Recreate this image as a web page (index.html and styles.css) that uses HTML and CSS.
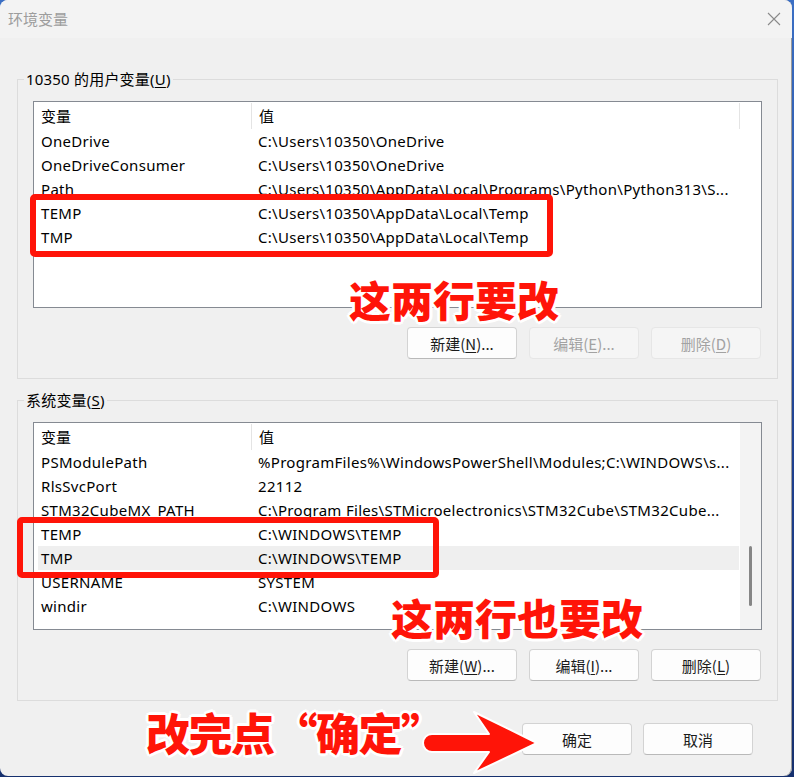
FILE: index.html
```html
<!DOCTYPE html>
<html lang="zh-CN">
<head>
<meta charset="utf-8">
<title>环境变量</title>
<link rel="stylesheet" href="styles.css">
</head>
<body>
<div class="window">
  <div class="titlebar">
    <span class="title">环境变量</span>
    <svg class="close" width="14" height="14" viewBox="0 0 14 14"><path d="M1 1 L13 13 M13 1 L1 13" stroke="#8a8a8a" stroke-width="1.1" fill="none"/></svg>
  </div>
  <div class="content">
    <fieldset class="group group-user">
      <legend>10350 的用户变量(<u>U</u>)</legend>
      <div class="list">
        <div class="head">
          <span class="hc hc1">变量</span><span class="hc hc2">值</span><span class="hc hc3"></span>
        </div>
        <div class="rows">
          <div class="row"><span class="c1">OneDrive</span><span class="c2">C:\Users\10350\OneDrive</span></div>
          <div class="row"><span class="c1">OneDriveConsumer</span><span class="c2">C:\Users\10350\OneDrive</span></div>
          <div class="row"><span class="c1">Path</span><span class="c2">C:\Users\10350\AppData\Local\Programs\Python\Python313\S...</span></div>
          <div class="row"><span class="c1">TEMP</span><span class="c2">C:\Users\10350\AppData\Local\Temp</span></div>
          <div class="row"><span class="c1">TMP</span><span class="c2">C:\Users\10350\AppData\Local\Temp</span></div>
        </div>
      </div>
      <div class="btns">
        <button class="btn">新建(<u>N</u>)...</button>
        <button class="btn" disabled>编辑(<u>E</u>)...</button>
        <button class="btn" disabled>删除(<u>D</u>)</button>
      </div>
    </fieldset>

    <fieldset class="group group-sys">
      <legend>系统变量(<u>S</u>)</legend>
      <div class="list list-scroll">
        <div class="main">
          <div class="head">
            <span class="hc hc1">变量</span><span class="hc hc2">值</span>
          </div>
          <div class="rows">
            <div class="row"><span class="c1">PSModulePath</span><span class="c2">%ProgramFiles%\WindowsPowerShell\Modules;C:\WINDOWS\s...</span></div>
            <div class="row"><span class="c1">RlsSvcPort</span><span class="c2">22112</span></div>
            <div class="row"><span class="c1">STM32CubeMX_PATH</span><span class="c2">C:\Program Files\STMicroelectronics\STM32Cube\STM32Cube...</span></div>
            <div class="row"><span class="c1">TEMP</span><span class="c2">C:\WINDOWS\TEMP</span></div>
            <div class="row row-hover"><span class="c1">TMP</span><span class="c2">C:\WINDOWS\TEMP</span></div>
            <div class="row"><span class="c1">USERNAME</span><span class="c2">SYSTEM</span></div>
            <div class="row"><span class="c1">windir</span><span class="c2">C:\WINDOWS</span></div>
          </div>
        </div>
        <div class="scrollbar"><div class="thumb"></div></div>
      </div>
      <div class="btns">
        <button class="btn">新建(<u>W</u>)...</button>
        <button class="btn">编辑(<u>I</u>)...</button>
        <button class="btn">删除(<u>L</u>)</button>
      </div>
    </fieldset>

    <div class="footer">
      <button class="btn">确定</button>
      <button class="btn">取消</button>
    </div>
  </div>

  <div class="mark mark-box1"></div>
  <div class="mark mark-box2"></div>
  <div class="note note1">这两行要改</div>
  <div class="note note2">这两行也要改</div>
  <div class="note note3">改完点“确定”</div>
  <svg class="arrow" width="130" height="70" viewBox="415 708 130 70">
    <path d="M432 734 L489 734 L474 712 L537 743 L474 773 L489 752 L432 752 A9 9 0 0 1 432 734 Z" fill="#ff1408" stroke="#ffffff" stroke-width="2" stroke-linejoin="round"/>
  </svg>
</div>
</body>
</html>
```

FILE: styles.css
```css
* { box-sizing: border-box; }

html, body {
  margin: 0;
  padding: 0;
}

body {
  width: 794px;
  height: 777px;
  background: linear-gradient(180deg, #3b6fc4 0%, #1d3f8f 60%, #16306e 100%);
  font-family: "Noto Sans", "Noto Sans CJK SC", sans-serif;
  font-size: 15px;
  color: #000;
  overflow: hidden;
}

.window {
  position: relative;
  width: 792px;
  height: 776px;
  background: #f0f0f0;
  border-radius: 8px;
  overflow: hidden;
  box-shadow: inset -1px 0 0 #9a9a9a;
}

.titlebar {
  height: 38px;
  display: flex;
  align-items: center;
  justify-content: space-between;
  padding: 0 11px 0 8px;
  background: #f3f3f3;
}

.title {
  color: #9d9d9d;
  font-family: "Noto Sans CJK SC", sans-serif;
  font-size: 15px;
  line-height: 20px;
}

.close { display: block; }

.content {
  padding: 31px 14px 0 17px;
}

.group {
  margin: 0;
  border: 1px solid #dcdcdc;
  padding: 12px 15px 19px 15px;
  min-width: 0;
}

.group legend {
  margin-left: -9px;
  padding: 0 2px 0 2px;
  line-height: 20px;
  letter-spacing: 0.2px;
  font-family: "Noto Sans", "Noto Sans CJK SC", sans-serif;
}

.group-sys {
  margin-top: 11px;
  padding-bottom: 19px;
}

u { text-decoration-thickness: 1px; text-underline-offset: 2px; }

.list {
  height: 207px;
  border: 1px solid #858a92;
  background: #fff;
}

.group-sys .list { height: 208px; }

.list-scroll {
  display: flex;
}

.list-scroll .main {
  width: 705px;
}

.head {
  display: flex;
  height: 27px;
  align-items: center;
}

.hc {
  height: 26px;
  display: flex;
  align-items: center;
  padding-left: 7px;
  font-family: "Noto Sans CJK SC", sans-serif;
}

.hc1 { width: 217px; }
.hc2 { width: 488px; border-left: 1px solid #e4e4e4; }
.hc3 { width: 22px; border-left: 1px solid #e4e4e4; }

.rows {
  margin-left: 4px;
}

.row {
  display: flex;
  height: 24px;
  align-items: center;
  white-space: nowrap;
  letter-spacing: 0.3px;
}

.row-hover { background: #efefef; }

.c1 {
  width: 220px;
  padding-left: 3px;
}

.c2 { flex: 1; }

.scrollbar {
  width: 22px;
  background: #f3f3f3;
  border-left: 1px solid #fff;
  position: relative;
}

.thumb {
  position: absolute;
  left: 9px;
  top: 123px;
  width: 3px;
  height: 60px;
  border-radius: 2px;
  background: #868686;
}

.btns {
  display: flex;
  justify-content: flex-end;
  gap: 12px;
  margin-top: 19px;
  padding-right: 1px;
}

.btn {
  width: 110px;
  height: 32px;
  border: 1px solid #d3d3d3;
  border-bottom-color: #b9b9b9;
  border-radius: 4px;
  background: #fdfdfd;
  font-family: "Noto Sans CJK SC", "Noto Sans", sans-serif;
  font-size: 15px;
  color: #1b1b1b;
  padding: 0;
}

.btn:disabled {
  background: #f5f5f5;
  border-color: #e6e6e6;
  color: #a2a2a2;
}

.footer {
  display: flex;
  justify-content: flex-end;
  gap: 11px;
  margin-top: 22px;
  padding-right: 25px;
}

/* annotations drawn over the dialog */
.mark {
  position: absolute;
  border: 6px solid #ff1408;
  border-radius: 5px;
}

.mark-box1 { left: 30px; top: 194px; width: 523px; height: 63px; }
.mark-box2 { left: 17px; top: 517px; width: 422px; height: 61px; }

.note {
  position: absolute;
  font-family: "Noto Sans CJK SC", sans-serif;
  font-weight: 900;
  color: #ff1408;
  line-height: 1;
  white-space: nowrap;
  text-shadow:
    2px 0 0 #fff, -2px 0 0 #fff, 0 2px 0 #fff, 0 -2px 0 #fff,
    2px 2px 0 #fff, -2px -2px 0 #fff, 2px -2px 0 #fff, -2px 2px 0 #fff,
    3px 0 0 #fff, -3px 0 0 #fff, 0 3px 0 #fff, 0 -3px 0 #fff;
}

.note1 { left: 349px; top: 278px; font-size: 42px; }
.note2 { left: 391px; top: 596px; font-size: 42px; }
.note3 { left: 146px; top: 710px; font-size: 44px; letter-spacing: -1.5px; }

.arrow {
  position: absolute;
  left: 415px;
  top: 708px;
}
```
